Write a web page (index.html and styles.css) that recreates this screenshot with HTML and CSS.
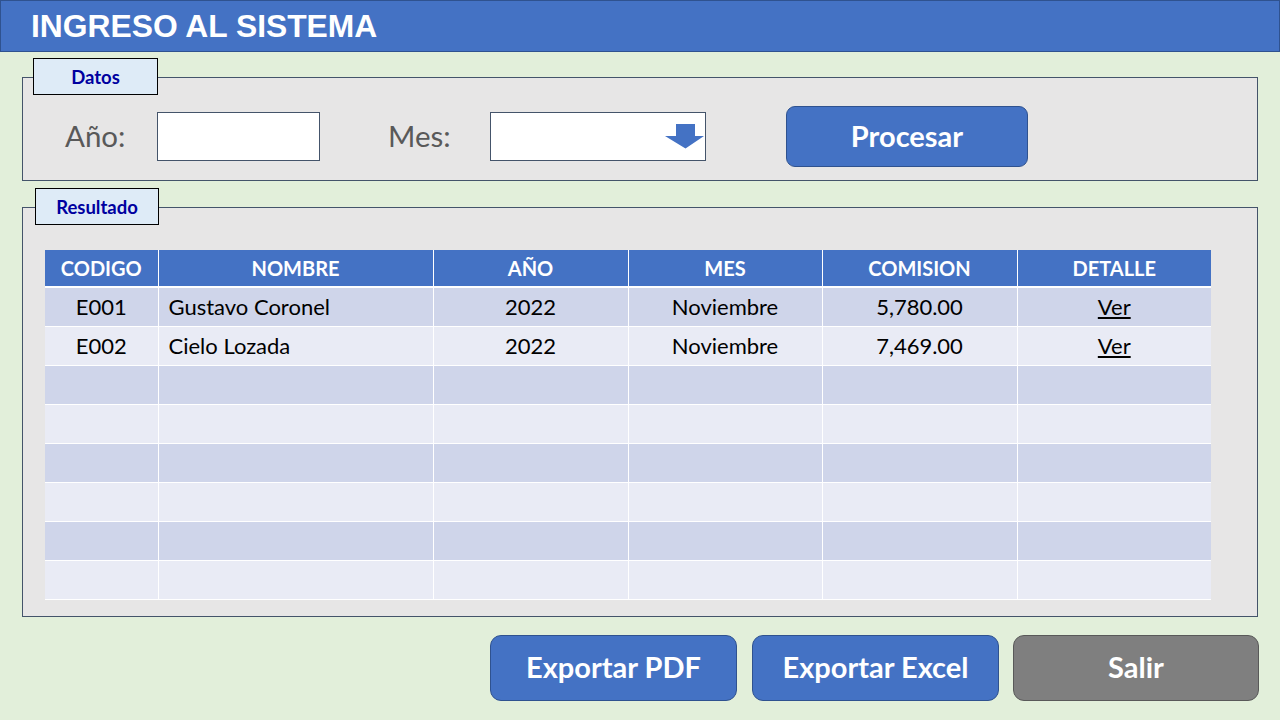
FILE: index.html
```html
<!DOCTYPE html>
<html lang="es">
<head>
<meta charset="utf-8">
<title>Ingreso al sistema</title>
<link rel="stylesheet" href="styles.css">
</head>
<body>
<header class="topbar"><h1 class="title">INGRESO AL SISTEMA</h1></header>
<main class="content">
  <section class="panel panel-datos">
    <div class="tab tab-datos">Datos</div>
    <div class="form-row">
      <label class="lbl lbl-anio">Año:</label>
      <div class="field field-anio"></div>
      <label class="lbl lbl-mes">Mes:</label>
      <div class="field field-mes">
        <svg class="arrow" width="40" height="25" viewBox="0 0 40 25"><path d="M11 0H30V12H39L20.5 24.5L0 12H11Z" fill="#4472C4"/></svg>
      </div>
      <button class="btn btn-procesar">Procesar</button>
    </div>
  </section>
  <section class="panel panel-res">
    <div class="tab tab-res">Resultado</div>
    <table class="grid">
      <colgroup><col style="width:113px"><col style="width:275px"><col style="width:195px"><col style="width:194px"><col style="width:195px"><col style="width:194px"></colgroup>
      <thead><tr><th>CODIGO</th><th>NOMBRE</th><th>AÑO</th><th>MES</th><th>COMISION</th><th>DETALLE</th></tr></thead>
      <tbody>
        <tr><td class="c">E001</td><td>Gustavo Coronel</td><td class="c">2022</td><td class="c">Noviembre</td><td class="c">5,780.00</td><td class="c"><span class="link">Ver</span></td></tr>
        <tr><td class="c">E002</td><td>Cielo Lozada</td><td class="c">2022</td><td class="c">Noviembre</td><td class="c">7,469.00</td><td class="c"><span class="link">Ver</span></td></tr>
        <tr><td></td><td></td><td></td><td></td><td></td><td></td></tr>
        <tr><td></td><td></td><td></td><td></td><td></td><td></td></tr>
        <tr><td></td><td></td><td></td><td></td><td></td><td></td></tr>
        <tr><td></td><td></td><td></td><td></td><td></td><td></td></tr>
        <tr><td></td><td></td><td></td><td></td><td></td><td></td></tr>
        <tr><td></td><td></td><td></td><td></td><td></td><td></td></tr>
      </tbody>
    </table>
  </section>
  <div class="actions">
    <button class="btn btn-big">Exportar PDF</button>
    <button class="btn btn-big">Exportar Excel</button>
    <button class="btn btn-big btn-gray">Salir</button>
  </div>
</main>
</body>
</html>
```
FILE: styles.css
```css
html, body { margin: 0; padding: 0; }
body {
  width: 1280px;
  height: 720px;
  background: #E2EFDA;
  font-family: Lato, "Open Sans", sans-serif;
  overflow: hidden;
}
.topbar {
  height: 50px;
  background: #4472C4;
  border: 1px solid #2F528F;
  box-sizing: content-box;
  width: 1278px;
}
.title {
  margin: 0;
  padding-left: 30px;
  font-family: "Liberation Sans", Arial, sans-serif;
  font-weight: bold;
  font-size: 31.8px;
  line-height: 50px;
  color: #fff;
}
.content { padding: 0 22px 0 22px; }
.panel {
  background: #E7E6E6;
  border: 1px solid #44546A;
  box-sizing: border-box;
  width: 1236px;
}
.panel-datos { margin-top: 25px; height: 104px; padding-bottom: 12px; }
.panel-res { margin-top: 26px; height: 410px; }
.tab {
  box-sizing: border-box;
  height: 37px;
  background: #DEEBF7;
  border: 1px solid #000;
  color: #0000A0;
  font-weight: bold;
  font-size: 18.5px;
  display: flex;
  align-items: center;
  justify-content: center;
  margin-top: -20px;
}
.tab-datos { width: 125px; margin-left: 10px; }
.tab-res { width: 124px; margin-left: 12px; }
.form-row {
  display: flex;
  align-items: center;
  height: 61px;
  margin-top: 11px;
}
.lbl {
  color: #595959;
  font-size: 29.5px;
  padding-bottom: 2px;
}
.lbl-anio { margin-left: 42px; width: 92px; }
.lbl-mes { margin-left: 68px; width: 102px; }
.field {
  box-sizing: border-box;
  height: 49px;
  background: #fff;
  border: 1px solid #44546A;
  position: relative;
}
.field-anio { width: 163px; }
.field-mes { width: 216px; }
.arrow { position: absolute; right: 0; top: 11px; }
.btn {
  box-sizing: border-box;
  background: #4472C4;
  border: 1px solid #2F528F;
  border-radius: 9px;
  color: #fff;
  font-family: Lato, "Open Sans", sans-serif;
  font-weight: bold;
  padding: 0 0 2px 0;
}
.btn-procesar { margin-left: 80px; width: 242px; height: 61px; font-size: 29px; }
.grid {
  margin: 25px 0 0 22px;
  border-collapse: collapse;
  table-layout: fixed;
  width: 1166px;
  font-size: 22px;
}
.grid th {
  height: 36px;
  padding: 0;
  background: #4472C4;
  color: #fff;
  font-weight: bold;
  font-size: 20px;
  border-left: 1px solid #fff;
  border-right: 1px solid #fff;
  border-bottom: 2px solid #fff;
  text-align: center;
}
.grid th:first-child { border-left: none; }
.grid td {
  height: 36px;
  padding: 0 10px 2px 10px;
  border: 1px solid #fff;
  color: #000;
  white-space: nowrap;
}
.grid td:first-child { border-left: none; }
.grid tr td:last-child, .grid th:last-child { border-right: none; }
.grid tbody tr:nth-child(odd) td { background: #CFD5EA; }
.grid tbody tr:nth-child(even) td { background: #E9EBF5; }
.grid tbody tr:last-child td { border-bottom: 1px solid #fff; }
.grid td.c { text-align: center; }
.link { text-decoration: underline; }
.actions {
  display: flex;
  justify-content: flex-end;
  gap: 15px;
  margin-top: 18px;
  margin-right: -1px;
}
.btn-big { width: 247px; height: 66px; font-size: 29px; border-radius: 11px; padding-bottom: 4px; }
.btn-gray { background: #7F7F7F; border-color: #595959; width: 246px; margin-left: -1px; }
```
